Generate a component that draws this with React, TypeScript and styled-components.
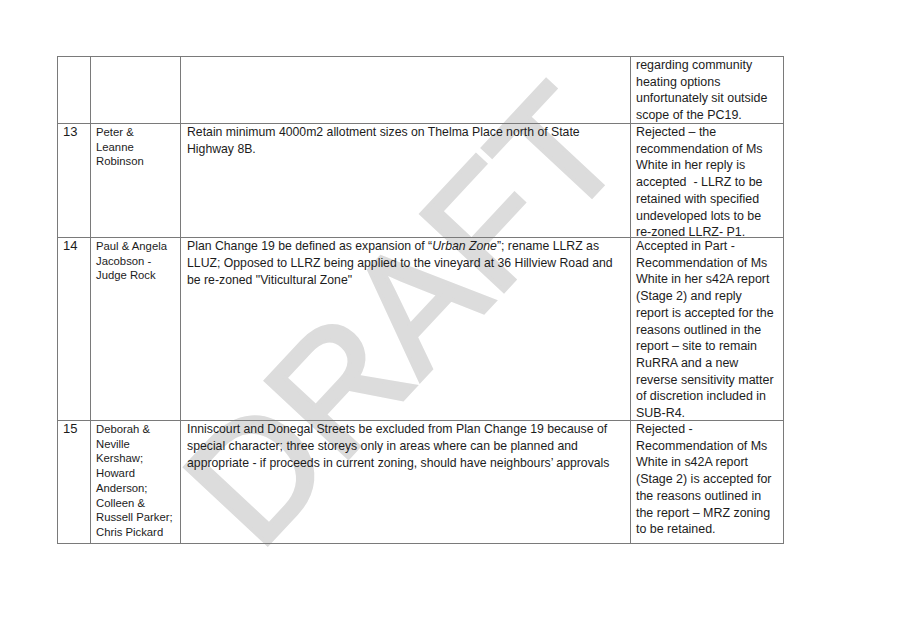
import React from "react";
import styled, { createGlobalStyle } from "styled-components";

type Row = {
  no?: string;
  names: string[];
  submission: React.ReactNode[];
  decision: string[];
};

const rows: Row[] = [
  {
    names: [],
    submission: [],
    decision: [
      "regarding community",
      "heating options",
      "unfortunately sit outside",
      "scope of the PC19.",
    ],
  },
  {
    no: "13",
    names: ["Peter &", "Leanne", "Robinson"],
    submission: [
      "Retain minimum 4000m2 allotment sizes on Thelma Place north of State",
      "Highway 8B.",
    ],
    decision: [
      "Rejected \u2013 the",
      "recommendation of Ms",
      "White in her reply is",
      "accepted  - LLRZ to be",
      "retained with specified",
      "undeveloped lots to be",
      "re-zoned LLRZ- P1.",
    ],
  },
  {
    no: "14",
    names: ["Paul & Angela", "Jacobson -", "Judge Rock"],
    submission: [
      <>
        Plan Change 19 be defined as expansion of {"\u201C"}
        <em>Urban Zone</em>
        {"\u201D"}; rename LLRZ as
      </>,
      "LLUZ; Opposed to LLRZ being applied to the vineyard at 36 Hillview Road and",
      'be re-zoned "Viticultural Zone"',
    ],
    decision: [
      "Accepted in Part -",
      "Recommendation of Ms",
      "White in her s42A report",
      "(Stage 2) and reply",
      "report is accepted for the",
      "reasons outlined in the",
      "report \u2013 site to remain",
      "RuRRA and a new",
      "reverse sensitivity matter",
      "of discretion included in",
      "SUB-R4.",
    ],
  },
  {
    no: "15",
    names: [
      "Deborah &",
      "Neville",
      "Kershaw;",
      "Howard",
      "Anderson;",
      "Colleen &",
      "Russell Parker;",
      "Chris Pickard",
    ],
    submission: [
      "Inniscourt and Donegal Streets be excluded from Plan Change 19 because of",
      "special character; three storeys only in areas where can be planned and",
      "appropriate - if proceeds in current zoning, should have neighbours\u2019 approvals",
    ],
    decision: [
      "Rejected -",
      "Recommendation of Ms",
      "White in s42A report",
      "(Stage 2) is accepted for",
      "the reasons outlined in",
      "the report \u2013 MRZ zoning",
      "to be retained.",
    ],
  },
];

const rowHeights = [67, 114, 183, 123];

const Lines: React.FC<{ lines: React.ReactNode[] }> = ({ lines }) => (
  <>
    {lines.map((line, i) => (
      <React.Fragment key={i}>
        {line}
        {i < lines.length - 1 && <br />}
      </React.Fragment>
    ))}
  </>
);

const App: React.FC = () => {
  return (
    <Page>
      <GlobalStyle />
      <Watermark aria-hidden="true">DRAFT</Watermark>
      <Table style={{ gridTemplateRows: rowHeights.map((h) => `${h}px`).join(" ") }}>
        {rows.map((row, index) => (
          <React.Fragment key={index}>
            <NumberCell>{row.no}</NumberCell>
            <NameCell>
              <Lines lines={row.names} />
            </NameCell>
            <TextCell>
              <Lines lines={row.submission} />
            </TextCell>
            <DecisionCell>
              <Lines lines={row.decision} />
            </DecisionCell>
          </React.Fragment>
        ))}
      </Table>
    </Page>
  );
};

const GlobalStyle = createGlobalStyle`
  html, body {
    margin: 0;
    padding: 0;
    background: #ffffff;
  }
  body {
    font-family: "Liberation Sans", Arial, sans-serif;
    color: #1c1c1c;
  }
`;

const Page = styled.div`
  position: relative;
  width: 907px;
  height: 626px;
  padding: 56px 0 0 57px;
  box-sizing: border-box;
  overflow: hidden;
  background: #ffffff;
`;

const Watermark = styled.div`
  position: absolute;
  left: 404px;
  top: 316px;
  transform: translate(-50%, -50%) rotate(-47deg);
  font-family: "Liberation Sans", Arial, sans-serif;
  font-size: 164px;
  line-height: 1;
  color: #dcdcdc;
  -webkit-text-stroke: 4px #dcdcdc;
  white-space: nowrap;
  pointer-events: none;
  z-index: 0;
`;

const Table = styled.div`
  position: relative;
  z-index: 1;
  display: grid;
  grid-template-columns: 33px 90px 450px 153px;
  width: max-content;
  border-top: 1px solid #7a7a7a;
  border-left: 1px solid #7a7a7a;
`;

const Cell = styled.div`
  border-right: 1px solid #7a7a7a;
  border-bottom: 1px solid #7a7a7a;
  padding: 0 0 0 5px;
  white-space: pre;
  font-size: 12.4px;
  line-height: 16.7px;
  overflow: visible;
`;

const NumberCell = styled(Cell)`
  font-size: 13px;
`;

const NameCell = styled(Cell)`
  font-size: 11.3px;
  line-height: 14.7px;
  padding-top: 1px;
`;

const TextCell = styled(Cell)`
  padding-left: 6px;
  font-size: 12.25px;
  line-height: 17px;
`;

const DecisionCell = styled(Cell)`
  font-size: 12.45px;
  line-height: 16.7px;
`;

export default App;
